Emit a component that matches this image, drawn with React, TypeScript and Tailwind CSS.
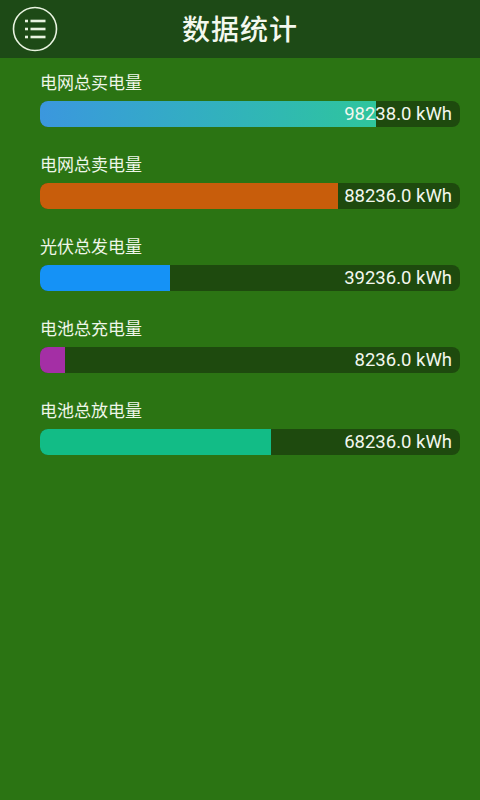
const rows = [
  { label: '电网总买电量', value: '98238.0 kWh', pct: 80, fill: 'bg-gradient-to-r from-[#3b97de] to-[#2fc59c]' },
  { label: '电网总卖电量', value: '88236.0 kWh', pct: 71, fill: 'bg-[#c85d0b]' },
  { label: '光伏总发电量', value: '39236.0 kWh', pct: 31, fill: 'bg-[#1592f6]' },
  { label: '电池总充电量', value: '8236.0 kWh', pct: 6, fill: 'bg-[#a42fa5]' },
  { label: '电池总放电量', value: '68236.0 kWh', pct: 55, fill: 'bg-[#12bc86]' },
];

function MenuIcon() {
  return (
    <svg width="46" height="46" viewBox="0 0 46 46" fill="none">
      <circle cx="23" cy="23" r="21.5" stroke="#e8f3e0" strokeWidth="1.6" />
      {[15, 23, 31].map((y) => (
        <g key={y}>
          <rect x="13" y={y - 1.3} width="3" height="2.6" fill="#e8f3e0" />
          <rect x="18.5" y={y - 1.3} width="15" height="2.6" fill="#e8f3e0" />
        </g>
      ))}
    </svg>
  );
}

export default function App() {
  return (
    <div
      className="w-[480px] h-[800px] flex flex-col bg-[#2b7413]"
      style={{ fontFamily: 'Roboto, "Noto Sans CJK SC", sans-serif' }}
    >
      {/* Header */}
      <header className="h-[58px] bg-[#1d4a16] relative flex items-center justify-center">
        <div className="absolute left-[12px] top-[6px]">
          <MenuIcon />
        </div>
        <h1 className="text-[28px] text-[#f3f8ee] font-medium tracking-[1px] mt-[4px]">数据统计</h1>
      </header>

      {/* Stats */}
      <div className="pl-[40px] pr-[20px] pt-[13px] flex flex-col gap-[26px]">
        {rows.map((r) => (
          <div key={r.label}>
            <p className="text-[17px] leading-[24px] text-[#eef6e8] mb-[6px]">{r.label}</p>
            <div className="relative h-[26px] rounded-[8px] bg-[#1e4a0e] overflow-hidden">
              <div className={`h-full ${r.fill}`} style={{ width: `${r.pct}%` }} />
              <span className="absolute right-[8px] top-[1px] h-full flex items-center text-[18.5px] text-[#f2f7ee]">
                {r.value}
              </span>
            </div>
          </div>
        ))}
      </div>
    </div>
  );
}
